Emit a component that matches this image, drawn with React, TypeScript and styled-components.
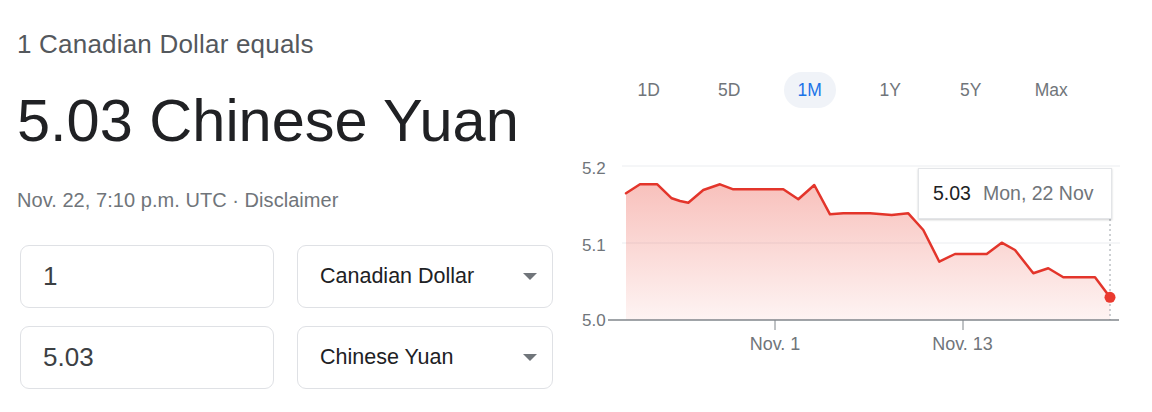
import React from "react";
import styled, { createGlobalStyle } from "styled-components";

const GlobalStyle = createGlobalStyle`
  html, body {
    margin: 0;
    padding: 0;
    background: #ffffff;
    font-family: "Liberation Sans", Arial, sans-serif;
  }
`;

const Page = styled.div`
  display: flex;
  flex-direction: row;
  width: 1152px;
  height: 412px;
  overflow: hidden;
  background: #ffffff;
`;

const LeftColumn = styled.div`
  display: flex;
  flex-direction: column;
  width: 536px;
  padding-left: 17px;
  padding-top: 29px;
`;

const Equals = styled.div`
  font-size: 26px;
  line-height: 30px;
  color: #54585d;
  letter-spacing: 0.2px;
`;

const Result = styled.div`
  margin-top: 28px;
  font-size: 59.5px;
  line-height: 68px;
  color: #202124;
`;

const Timestamp = styled.div`
  margin-top: 33px;
  font-size: 20px;
  line-height: 24px;
  color: #70757a;
  letter-spacing: 0.05px;
`;

const ConverterGrid = styled.div`
  display: grid;
  grid-template-columns: 254px 256px;
  grid-auto-rows: 63px;
  column-gap: 23px;
  row-gap: 18px;
  margin-top: 33px;
  margin-left: 3px;
`;

const AmountInput = styled.input`
  box-sizing: border-box;
  width: 100%;
  height: 100%;
  margin: 0;
  padding: 0 22px;
  border: 1px solid #dfe1e5;
  border-radius: 9px;
  background: #ffffff;
  font-family: "Liberation Sans", Arial, sans-serif;
  font-size: 26px;
  color: #3c4043;
  outline: none;
`;

const CurrencySelect = styled.div`
  box-sizing: border-box;
  display: flex;
  align-items: center;
  justify-content: space-between;
  height: 100%;
  padding: 0 15px 0 22px;
  border: 1px solid #dfe1e5;
  border-radius: 9px;
  background: #ffffff;
  font-size: 21.5px;
  color: #202124;
`;

const Caret = styled.span`
  width: 0;
  height: 0;
  border-left: 7.5px solid transparent;
  border-right: 7.5px solid transparent;
  border-top: 7px solid #70757a;
`;

const ChartColumn = styled.div`
  display: flex;
  flex-direction: column;
  width: 560px;
  margin-left: 17px;
  padding-top: 72px;
`;

const RangeTabs = styled.div`
  display: flex;
  justify-content: center;
  gap: 28.5px;
`;

const RangeTab = styled.button<{ $active?: boolean }>`
  width: 52px;
  height: 36px;
  padding: 0;
  border: none;
  border-radius: 18px;
  background: ${(p) => (p.$active ? "#f0f3f8" : "transparent")};
  color: ${(p) => (p.$active ? "#1a73e8" : "#70757a")};
  font-family: "Liberation Sans", Arial, sans-serif;
  font-size: 17.5px;
  cursor: pointer;
`;

const ChartArea = styled.div`
  position: relative;
  margin-top: 42px;
  width: 560px;
  height: 210px;
`;

const Tooltip = styled.div`
  position: absolute;
  left: 348px;
  top: 18px;
  box-sizing: border-box;
  width: 194px;
  height: 51px;
  display: flex;
  align-items: center;
  gap: 12px;
  padding-left: 14px;
  background: #ffffff;
  border: 1px solid #e3e5e8;
  box-shadow: 0 1px 2px rgba(60, 64, 67, 0.25);
  font-size: 19.5px;
  white-space: nowrap;
`;

const TipValue = styled.span`
  color: #202124;
`;

const TipDate = styled.span`
  color: #70757a;
`;

const points: [number, number][] = [
  [56, 43.3], [70, 34.3], [87.3, 34.3], [101.7, 48.3], [110, 51], [118.3, 52.7],
  [133.3, 40], [150, 34.3], [163.3, 39.3], [213.3, 39.3], [228.3, 49.3], [244.3, 35],
  [260, 64.3], [273.3, 63.3], [300, 63.3], [321.7, 65], [338.3, 63.3], [353.3, 80],
  [369.3, 111.7], [385, 104], [416.7, 104], [431.7, 92.7], [445, 100], [463.3, 123.3],
  [478.3, 118.3], [493.3, 127.3], [525, 127.3], [540, 147.3],
];

const BASE_Y = 170;

const linePath = points.map(([x, y], i) => `${i === 0 ? "M" : "L"}${x} ${y}`).join(" ");
const areaPath = `${linePath} L540 ${BASE_Y} L56 ${BASE_Y} Z`;

const tabs = ["1D", "5D", "1M", "1Y", "5Y", "Max"];

const RateChart: React.FC = () => (
  <ChartArea>
    <svg width="560" height="210" viewBox="0 0 560 210">
      <defs>
        <linearGradient id="fillRed" x1="0" y1="0" x2="0" y2="1">
          <stop offset="0" stopColor="#ea4335" stopOpacity="0.33" />
          <stop offset="1" stopColor="#ea4335" stopOpacity="0.06" />
        </linearGradient>
      </defs>
      <g fontFamily="Liberation Sans, Arial, sans-serif" fontSize="17" fill="#70757a">
        <text x="12" y="24">5.2</text>
        <text x="12" y="101">5.1</text>
        <text x="12" y="176">5.0</text>
      </g>
      <line x1="52" y1="16" x2="550" y2="16" stroke="#ebedf0" strokeWidth="1" />
      <line x1="52" y1="93" x2="550" y2="93" stroke="#ebedf0" strokeWidth="1" />
      <path d={areaPath} fill="url(#fillRed)" />
      <line x1="540" y1="69" x2="540" y2={BASE_Y} stroke="#9aa0a6" strokeWidth="1" strokeDasharray="2 3" />
      <line x1="38" y1={BASE_Y} x2="549" y2={BASE_Y} stroke="#80868b" strokeWidth="1.5" />
      <line x1="205" y1={BASE_Y} x2="205" y2="180" stroke="#80868b" strokeWidth="1" />
      <line x1="393" y1={BASE_Y} x2="393" y2="180" stroke="#80868b" strokeWidth="1" />
      <path d={linePath} fill="none" stroke="#e3352b" strokeWidth="2.5" strokeLinejoin="round" strokeLinecap="round" />
      <circle cx="540" cy="147.3" r="5.5" fill="#ea3a2f" />
      <g fontFamily="Liberation Sans, Arial, sans-serif" fontSize="18" fill="#70757a" textAnchor="middle">
        <text x="205" y="199.5">Nov. 1</text>
        <text x="392.5" y="199.5">Nov. 13</text>
      </g>
    </svg>
    <Tooltip>
      <TipValue>5.03</TipValue>
      <TipDate>Mon, 22 Nov</TipDate>
    </Tooltip>
  </ChartArea>
);

const App: React.FC = () => {
  return (
    <>
      <GlobalStyle />
      <Page>
        <LeftColumn>
          <Equals>1 Canadian Dollar equals</Equals>
          <Result>5.03 Chinese Yuan</Result>
          <Timestamp>Nov. 22, 7:10 p.m. UTC · Disclaimer</Timestamp>
          <ConverterGrid>
            <AmountInput readOnly value="1" />
            <CurrencySelect>
              Canadian Dollar
              <Caret />
            </CurrencySelect>
            <AmountInput readOnly value="5.03" />
            <CurrencySelect>
              Chinese Yuan
              <Caret />
            </CurrencySelect>
          </ConverterGrid>
        </LeftColumn>
        <ChartColumn>
          <RangeTabs>
            {tabs.map((t) => (
              <RangeTab key={t} $active={t === "1M"}>
                {t}
              </RangeTab>
            ))}
          </RangeTabs>
          <RateChart />
        </ChartColumn>
      </Page>
    </>
  );
};

export default App;
